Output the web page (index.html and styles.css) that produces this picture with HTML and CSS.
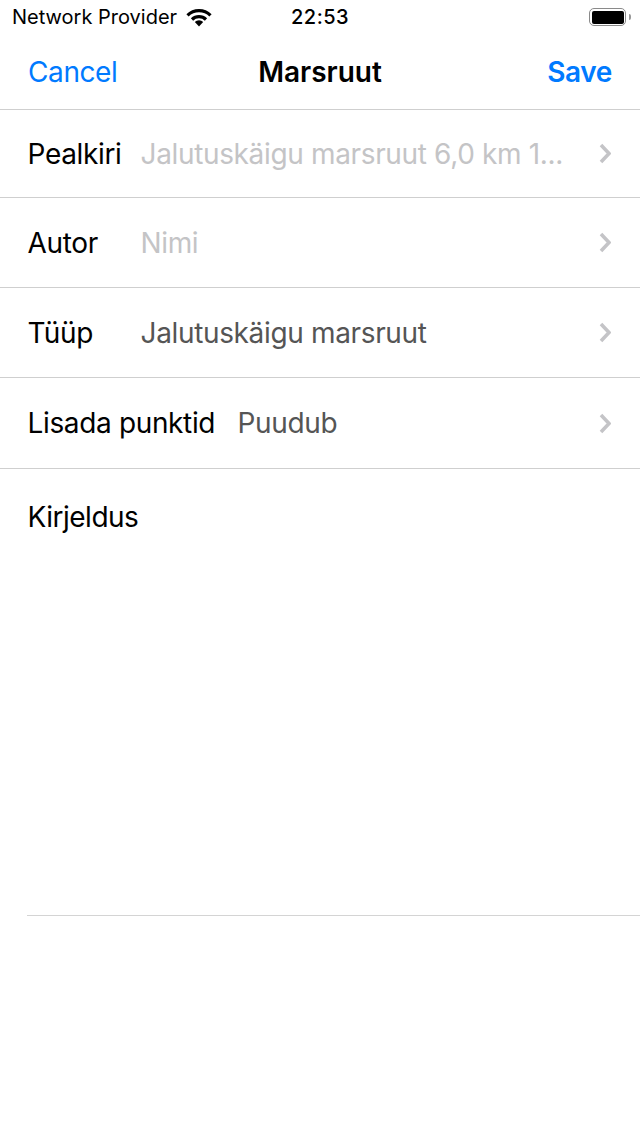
FILE: index.html
```html
<!DOCTYPE html>
<html lang="et">
<head>
  <meta charset="UTF-8">
  <title>Marsruut</title>
  <link rel="stylesheet" href="styles.css">
</head>
<body>
  <!-- Status bar -->
  <div class="status-bar">
    <div class="status-left">
      <span>Network Provider</span>
      <svg class="wifi" width="26" height="20" viewBox="0 0 26 20">
        <path class="wifi-arc" d="M1.500 8.300A16.500 16.500 0 0 1 24.500 8.300"/>
        <path class="wifi-arc" d="M6 12.500A10 10 0 0 1 20 12.500"/>
        <path class="wifi-dot" d="M13 19.500L8.800 15A6 6 0 0 1 17.200 15Z"/>
      </svg>
    </div>
    <div class="status-time">22:53</div>
    <div class="status-right">
      <div class="battery"><div class="battery-fill"></div></div>
      <div class="battery-cap"></div>
    </div>
  </div>

  <!-- Navigation bar -->
  <div class="nav-bar">
    <span class="nav-side nav-button">Cancel</span>
    <span class="nav-title">Marsruut</span>
    <span class="nav-side nav-button nav-save">Save</span>
  </div>

  <!-- Form rows -->
  <div class="row row-first">
    <span class="row-label">Pealkiri</span>
    <span class="row-value placeholder">Jalutuskäigu marsruut 6,0 km 1...</span>
    <svg class="chevron" width="12" height="21" viewBox="0 0 12 21"><path d="M2 2l8 8.500-8 8.500"/></svg>
  </div>
  <div class="row">
    <span class="row-label">Autor</span>
    <span class="row-value placeholder">Nimi</span>
    <svg class="chevron" width="12" height="21" viewBox="0 0 12 21"><path d="M2 2l8 8.500-8 8.500"/></svg>
  </div>
  <div class="row">
    <span class="row-label">Tüüp</span>
    <span class="row-value">Jalutuskäigu marsruut</span>
    <svg class="chevron" width="12" height="21" viewBox="0 0 12 21"><path d="M2 2l8 8.500-8 8.500"/></svg>
  </div>
  <div class="row row-last">
    <span class="row-label row-label-wide">Lisada punktid</span>
    <span class="row-value">Puudub</span>
    <svg class="chevron" width="12" height="21" viewBox="0 0 12 21"><path d="M2 2l8 8.500-8 8.500"/></svg>
  </div>

  <!-- Description -->
  <div class="description">
    <div class="description-label">Kirjeldus</div>
  </div>
</body>
</html>
```

FILE: styles.css
```css
/* General */
body {
  font-family: Inter, "Liberation Sans", sans-serif;
  margin: 0;
  background: #fff;
  color: #000;
}

/* Status bar */
.status-bar {
  display: flex;
  align-items: center;
  height: 34px;
  padding: 0 9px 0 12px;
  font-size: 20px;
}

.status-left {
  display: flex;
  align-items: center;
  gap: 9px;
  width: 279px;
}

.wifi-arc {
  fill: none;
  stroke: #000;
  stroke-width: 3.200;
}

.wifi-dot {
  fill: #000;
}

.status-time {
  font-weight: 500;
  letter-spacing: 0.5px;
}

.status-right {
  display: flex;
  align-items: center;
  margin-left: auto;
}

.battery {
  box-sizing: border-box;
  width: 37px;
  height: 18px;
  border: 1.500px solid #8a8a8a;
  border-radius: 5px;
  padding: 1.500px;
}

.battery-fill {
  height: 100%;
  background: #000;
  border-radius: 2px;
}

.battery-cap {
  width: 2px;
  height: 6px;
  margin-left: 3px;
  background: #999;
  border-radius: 0 2px 2px 0;
}

/* Navigation bar */
.nav-bar {
  display: flex;
  align-items: center;
  height: 75px;
  padding: 0 28px;
  font-size: 28px;
  border-bottom: 1px solid #cfcfcf;
}

.nav-side {
  flex: 1;
}

.nav-button {
  color: #007aff;
  letter-spacing: -0.4px;
}

.nav-save {
  font-weight: 600;
  text-align: right;
}

.nav-title {
  font-weight: 600;
}

/* Rows */
.row {
  display: flex;
  align-items: center;
  box-sizing: border-box;
  height: 90px;
  padding: 0 29px 0 28px;
  font-size: 28px;
  letter-spacing: -0.35px;
  border-bottom: 1px solid #cfcfcf;
}

.row-first {
  height: 88px;
}

.row-last {
  height: 91px;
}

.row-label {
  flex: none;
  width: 113px;
  margin-left: -0.5px;
  white-space: nowrap;
}

.row-label-wide {
  width: 210px;
}

.row-value {
  flex: 1;
  color: #555;
  white-space: nowrap;
  overflow: hidden;
}

.placeholder {
  color: #c4c4c6;
}

.chevron {
  flex: none;
  fill: none;
  stroke: #c4c4c7;
  stroke-width: 3.500;
}

/* Description */
.description {
  height: 446px;
  margin-left: 27px;
  border-bottom: 1px solid #d4d4d4;
}

.description-label {
  padding: 31px 0 0 0.5px;
  font-size: 28px;
  letter-spacing: -0.5px;
}
```
